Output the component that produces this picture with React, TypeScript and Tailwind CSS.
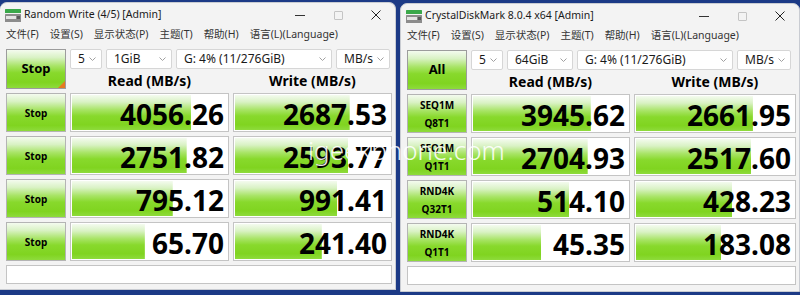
import React from "react";

type Row = {
  label: string[];
  read: string;
  readPct: number;
  write: string;
  writePct: number;
};

interface WinProps {
  title: string;
  button: string;
  marker?: boolean;
  size: string;
  rows: Row[];
  className?: string;
}

const green =
  "bg-[linear-gradient(180deg,#f4fbef_0%,#d9f2c4_20%,#a8e466_42%,#88d92c_60%,#80d420_85%,#8edb3c_100%)]";

const menu = ["文件(F)", "设置(S)", "显示状态(P)", "主题(T)", "帮助(H)", "语言(L)(Language)"];

const Combo = ({ text, w }: { text: string; w: string }) => (
  <div
    className={`flex h-[20px] items-center justify-between rounded-[2px] border border-[#d6d6d6] bg-white pl-[7px] pr-[5px] text-[12px] text-[#1a1a1a] ${w}`}>
    <span>{text}</span>
    <svg width="7" height="4" viewBox="0 0 7 4">
      <path d="M0.5 0.5 L3.5 3.5 L6.5 0.5" stroke="#a0a0a0" strokeWidth="1" fill="none" />
    </svg>
  </div>
);

const AppIcon = () => (
  <svg width="16" height="13" viewBox="0 0 16 13">
    <rect x="0" y="0" width="16" height="4" rx="0.5" fill="#3aa84a" />
    <rect x="0" y="5" width="16" height="8" rx="0.5" fill="#8c8c8c" />
    <rect x="1" y="7" width="10" height="3" fill="#e4e4e4" />
    <rect x="12" y="7" width="3" height="3" fill="#5a5a5a" />
  </svg>
);

const Bar = ({ value, pct }: { value: string; pct: number }) => (
  <div className="h-[39px] border border-[#c4c4c4] bg-white p-[1px]">
    <div
      className={`flex h-full items-center justify-end bg-no-repeat pr-[3px] pt-[2px] text-[28px] font-bold leading-none text-black ${green}`}
      style={{ backgroundSize: `${pct}% 100%` }}>
      {value}
    </div>
  </div>
);

const Window = ({ title, button, marker, size, rows, className }: WinProps) => {
  return (
    <div
      className={`flex flex-col overflow-hidden rounded-t-[7px] border border-[#c9ccd2] bg-[#f3f3f3] font-['Noto_Sans','Noto_Sans_CJK_SC',sans-serif] ${className}`}>
      <div className="flex h-[24px] items-center">
        <div className="ml-[5px]">
          <AppIcon />
        </div>
        <span className="ml-[3px] text-[10.5px] text-[#1a1a1a]">{title}</span>
        <div className="ml-auto flex h-full">
          <div className="flex w-[38px] items-center justify-center">
            <div className="h-px w-[10px] bg-[#333]" />
          </div>
          <div className="flex w-[38px] items-center justify-center">
            <div className="h-[9px] w-[9px] rounded-[1px] border border-[#c4c4c4]" />
          </div>
          <div className="flex w-[38px] items-center justify-center">
            <svg width="10" height="10" viewBox="0 0 10 10">
              <path d="M0.5 0.5 L9.5 9.5 M9.5 0.5 L0.5 9.5" stroke="#222" strokeWidth="1" />
            </svg>
          </div>
        </div>
      </div>

      <div className="flex h-[16px] items-center gap-[11px] pl-[6px] text-[10.5px] text-[#333]">
        {menu.map((m) => (
          <span key={m}>{m}</span>
        ))}
      </div>

      <div className="grid grid-cols-[60px_159px_1fr] gap-[4px] pl-[6px] pr-[3px] pt-[6px]">
        <div
          className={`relative flex h-[40px] items-center justify-center border border-[#9c9c9c] text-[13px] font-bold text-black ${green}`}>
          {button}
          {marker && (
            <div className="absolute bottom-0 right-0 h-0 w-0 border-b-[7px] border-l-[7px] border-b-[#e57a20] border-l-transparent" />
          )}
        </div>
        <div className="col-span-2 flex flex-col">
          <div className="flex gap-[4px]">
            <Combo text="5" w="w-[32px]" />
            <Combo text={size} w="w-[66px]" />
            <Combo text="G: 4% (11/276GiB)" w="w-[156px]" />
            <Combo text="MB/s" w="w-[54px]" />
          </div>
          <div className="grid h-[20px] grid-cols-[159px_1fr] gap-[4px] pt-[2px] text-center text-[14px] font-bold leading-[20px] text-black">
            <span>Read (MB/s)</span>
            <span>Write (MB/s)</span>
          </div>
        </div>

        {rows.map((r) => (
          <React.Fragment key={r.read}>
            <div
              className={`flex h-[39px] flex-col items-center justify-center border border-[#b4b4b4] text-[10px] font-bold leading-[18px] text-black ${green}`}>
              {r.label.map((l) => (
                <span key={l}>{l}</span>
              ))}
            </div>
            <Bar value={r.read} pct={r.readPct} />
            <Bar value={r.write} pct={r.writePct} />
          </React.Fragment>
        ))}

        <div className="col-span-3 h-[19px] border border-[#c4c4c4] bg-white" />
      </div>
    </div>
  );
};

const leftRows: Row[] = [
  { label: ["Stop"], read: "4056.26", readPct: 77, write: "2687.53", writePct: 74 },
  { label: ["Stop"], read: "2751.82", readPct: 74, write: "2593.77", writePct: 73 },
  { label: ["Stop"], read: "795.12", readPct: 65, write: "991.41", writePct: 66 },
  { label: ["Stop"], read: "65.70", readPct: 47, write: "241.40", writePct: 56 },
];

const rightRows: Row[] = [
  { label: ["SEQ1M", "Q8T1"], read: "3945.62", readPct: 76, write: "2661.95", writePct: 74 },
  { label: ["SEQ1M", "Q1T1"], read: "2704.93", readPct: 74, write: "2517.60", writePct: 73 },
  { label: ["RND4K", "Q32T1"], read: "514.10", readPct: 62, write: "428.23", writePct: 61 },
  { label: ["RND4K", "Q1T1"], read: "45.35", readPct: 44, write: "183.08", writePct: 54 },
];

export default function App() {
  return (
    <div className="relative flex h-[295px] w-[800px] items-start overflow-hidden bg-[#1c3a86]">
      <Window
        title="Random Write (4/5) [Admin]"
        button="Stop"
        marker
        size="1GiB"
        rows={leftRows}
        className="mt-[2px] h-[288px] w-[397px] border-l-0"
      />
      <Window
        title="CrystalDiskMark 8.0.4 x64 [Admin]"
        button="All"
        size="64GiB"
        rows={rightRows}
        className="ml-[4px] mt-[3px] h-[289px] w-[401px]"
      />
      <div className="absolute left-[308px] top-[137px] font-['Noto_Sans',sans-serif] text-[26px] font-light leading-none text-white/90">
        igeekphone.com
      </div>
    </div>
  );
}
